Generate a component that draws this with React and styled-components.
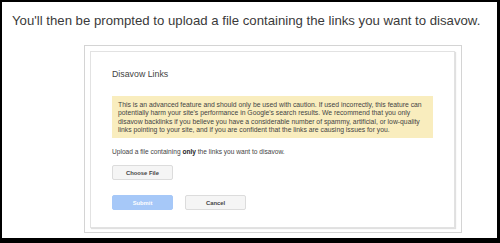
import styled, { createGlobalStyle } from "styled-components";

const Global = createGlobalStyle`
  html, body { margin: 0; padding: 0; background: #000; }
  body { font-family: "Liberation Sans", Arial, sans-serif; }
`

const Page = styled.div`
  width: 500px;
  height: 243px;
  box-sizing: border-box;
  padding: 2px 3px 5px 2px;
  background: #000;
`

const Panel = styled.div`
  height: 100%;
  background: #fff;
  display: flex;
  flex-direction: column;
`

const Lead = styled.p`
  margin: 0;
  padding: 10px 0 0 10px;
  font-size: 13.2px;
  line-height: 17px;
  color: #3a3a3a;
  white-space: nowrap;
`

const Frame = styled.div`
  margin: 16px 0 0 82px;
  width: 378px;
  height: 188px;
  box-sizing: border-box;
  border: 1px solid #d4d4d4;
  padding: 5px 6px 4px 5px;
`

const Card = styled.div`
  height: 100%;
  box-sizing: border-box;
  border: 1px solid #e2e2e2;
  box-shadow: 1px 1px 1px rgba(0,0,0,0.12);
  padding: 17px 21px 0 21px;
  display: flex;
  flex-direction: column;
`

const Title = styled.h2`
  margin: 0;
  font-size: 8.8px;
  line-height: 11px;
  font-weight: normal;
  color: #444;
`

const Warning = styled.div`
  margin-top: 16px;
  background: #f9edbe;
  padding: 5px 6px 4px 6px;
  font-size: 6.8px;
  line-height: 8.3px;
  color: #444;
  white-space: nowrap;
`

const Note = styled.p`
  margin: 9px 0 0;
  font-size: 6.6px;
  line-height: 9px;
  color: #444;
  b { color: #222; }
`

const Row = styled.div`
  display: flex;
  gap: 12px;
  margin-top: ${p => p.$top}px;
`

const Button = styled.button`
  width: 61px;
  height: 15px;
  box-sizing: border-box;
  padding: 0;
  border: 1px solid ${p => (p.$primary ? "#a6c8f8" : "#dcdcdc")};
  border-radius: 2px;
  background: ${p => (p.$primary ? "#a6c8f8" : "#f5f5f5")};
  color: ${p => (p.$primary ? "#fff" : "#444")};
  font-family: "Liberation Sans", Arial, sans-serif;
  font-size: 5.8px;
  font-weight: bold;
`

export default function App() {
  return (
    <Page>
      <Global />
      <Panel>
        <Lead>You'll then be prompted to upload a file containing the links you want to disavow.</Lead>
        <Frame>
          <Card>
            <Title>Disavow Links</Title>
            <Warning>
              This is an advanced feature and should only be used with caution. If used incorrectly, this feature can<br />
              potentially harm your site's performance in Google's search results. We recommend that you only<br />
              disavow backlinks if you believe you have a considerable number of spammy, artificial, or low-quality<br />
              links pointing to your site, and if you are confident that the links are causing issues for you.
            </Warning>
            <Note>Upload a file containing <b>only</b> the links you want to disavow.</Note>
            <Row $top={9}>
              <Button>Choose File</Button>
            </Row>
            <Row $top={15}>
              <Button $primary>Submit</Button>
              <Button>Cancel</Button>
            </Row>
          </Card>
        </Frame>
      </Panel>
    </Page>
  );
}
